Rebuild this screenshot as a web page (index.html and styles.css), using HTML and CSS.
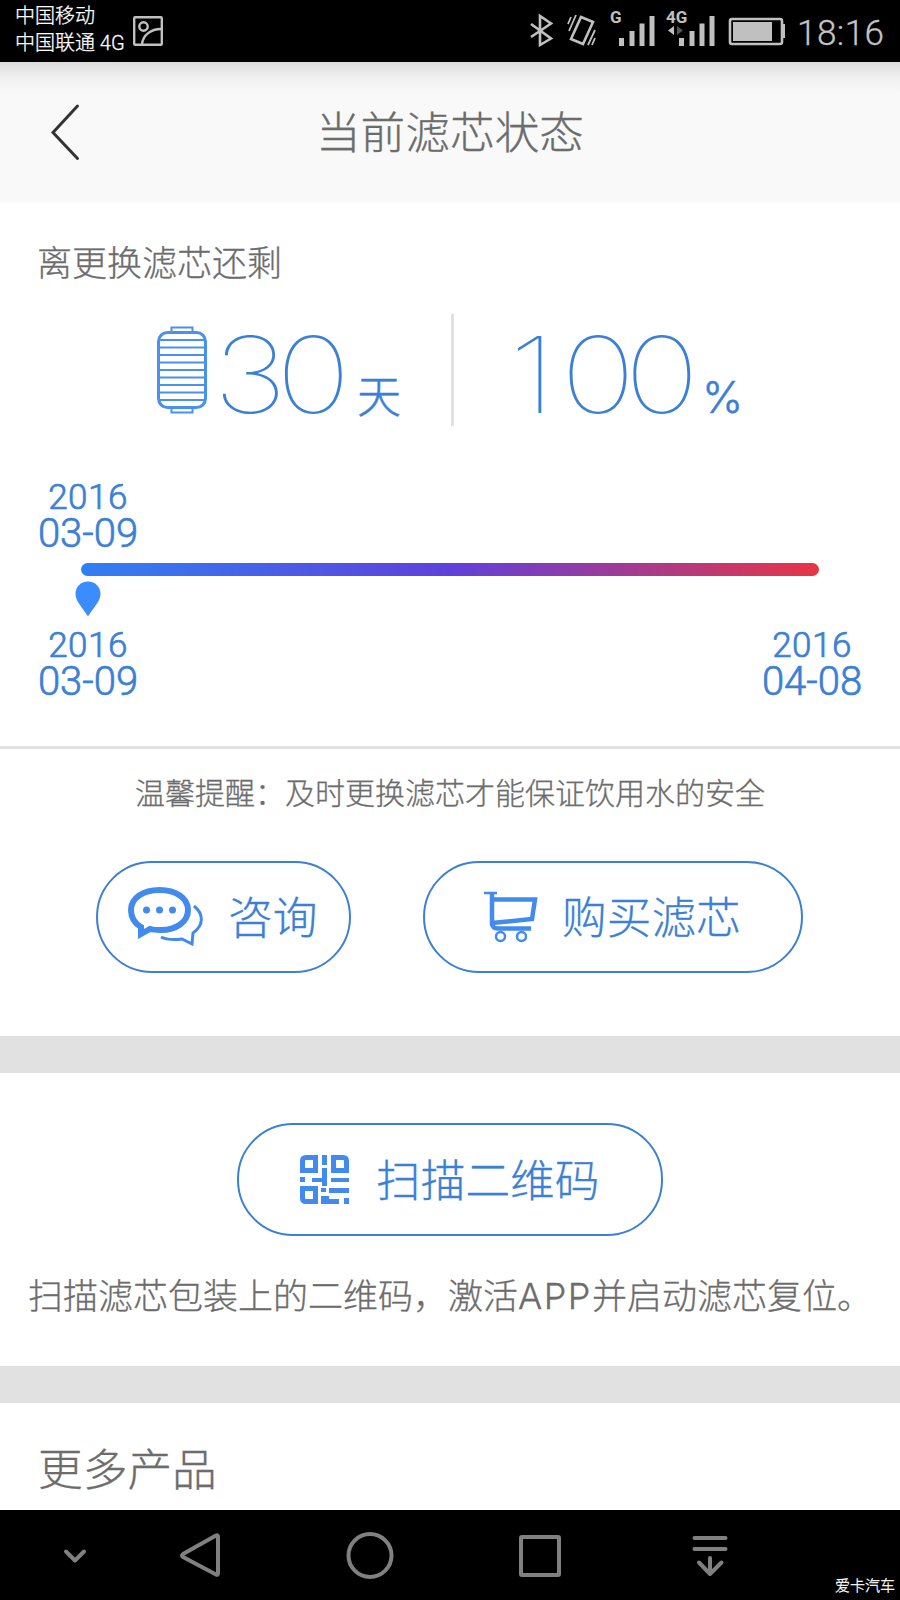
FILE: index.html
```
<!DOCTYPE html>
<html lang="zh-CN">
<head>
<meta charset="utf-8">
<title>当前滤芯状态</title>
<link rel="stylesheet" href="styles.css">
</head>
<body>
<div class="status-bar">
  <div class="carriers">
    <div>中国移动</div>
    <div>中国联通 4G</div>
  </div>
  <svg class="picture" width="30" height="30" viewBox="0 0 30 30">
    <rect x="1.2" y="1.2" width="27.6" height="27.6" rx="1"/>
    <circle cx="10.5" cy="10.5" r="4.2"/>
    <path d="M9 28C10 19 18 13 28 13"/>
  </svg>
  <svg class="status-icons" width="260" height="62" viewBox="0 0 260 62">
    <path class="line" d="M1 24L21 38.500L10 45V16L21 23.500L1 37"/>
    <path class="line" d="M51 17L63 22L53 44L41 39Z"/>
    <path class="thin" d="M46 15L39 31M41 17L38 24M65 30L58 45M65 38L62 45"/>
    <text class="net" x="80" y="23">G</text>
    <path class="bars" d="M91.500 38V46M102 31V46M112 23.500V46M122 16V46"/>
    <text class="net" x="136" y="23">4G</text>
    <path class="fill" d="M144 26V35L138 30.500Z"/>
    <path class="dim" d="M147 26V35L153 30.500Z"/>
    <path class="bars" d="M151.500 38V46M162 31V46M172 23.500V46M182 16V46"/>
    <rect class="line" x="200" y="19" width="52" height="25" rx="2"/>
    <path class="fill" d="M203 22H242V41H203ZM252 24H255V38H252Z"/>
  </svg>
  <div class="clock">18:16</div>
</div>

<div class="header">
  <svg class="back" width="30" height="58" viewBox="0 0 30 58"><path d="M27.500 3L3 29.500L27.500 55.500"/></svg>
  <h1>当前滤芯状态</h1>
</div>

<div class="filter">
  <h2>离更换滤芯还剩</h2>
  <div class="stats">
    <div class="stat days">
      <svg width="50" height="88" viewBox="0 0 50 88">
        <rect class="shell" x="1.500" y="6.500" width="47" height="75" rx="9"/>
        <path d="M14.500 6V1.500H35.500V6M14.500 82V86.500H35.500V82M2 14H48M2 21.500H48M2 29H48M2 36.500H48M2 44H48M2 51.500H48M2 59H48M2 66.500H48M2 74H48"/>
      </svg>
      <span class="number">30</span><span class="unit">天</span>
    </div>
    <div class="stat percent">
      <span class="number"><span class="one">1</span>00</span><span class="unit">%</span>
    </div>
  </div>
  <div class="timeline">
    <div class="date"><span>2016</span><b>03-09</b></div>
    <div class="bar"></div>
    <svg class="pin" width="26" height="36" viewBox="0 0 26 36"><path d="M13 0.500C5.500 0.500 0.500 6 0.500 13C0.500 20 7 26 13 35.500C19 26 25.500 20 25.500 13C25.500 6 20.500 0.500 13 0.500Z"/></svg>
    <div class="range">
      <div class="date"><span>2016</span><b>03-09</b></div>
      <div class="date"><span>2016</span><b>04-08</b></div>
    </div>
  </div>
</div>

<div class="service">
  <p>温馨提醒：及时更换滤芯才能保证饮用水的安全</p>
  <div class="buttons">
    <a class="button ask">
      <svg width="76" height="60" viewBox="0 0 76 60">
        <path class="bubble" d="M13 47L13 40C6 36 3 30 3 23C3 11 15 3 31.500 3C48 3 60 11 60 23C60 35 48 43 33 43C28 43 25 43 22 42Z"/>
        <circle cx="18.500" cy="23" r="3.500"/><circle cx="31.500" cy="23" r="3.500"/><circle cx="44.500" cy="23" r="3.500"/>
        <path class="tail" d="M66 19C76 27 76 38 65 46L64 57L54 52C46 53 39 53 33 50"/>
      </svg>
      <span>咨询</span>
    </a>
    <a class="button buy">
      <svg width="54" height="52" viewBox="0 0 54 52">
        <path class="thin" d="M0 2H13"/>
        <path class="cart" d="M8 2V32L48 28L51 8.500H8M8 31C8 36 10 37.500 14 37.500H47"/>
        <circle cx="16.500" cy="45.500" r="4.500"/><circle cx="37.500" cy="45.500" r="4.500"/>
      </svg>
      <span>购买滤芯</span>
    </a>
  </div>
</div>

<div class="scan">
  <a class="button">
    <svg width="49" height="49" viewBox="0 0 49 49">
      <path class="eye" d="M15.500 2.500V15.500H2.500V6Q2.500 2.500 6 2.500ZM33.500 2.500V15.500H46.500V6Q46.500 2.500 43 2.500ZM15.500 46.500V33.500H2.500V43Q2.500 46.500 6 46.500Z"/>
      <path d="M22 0H27V10H22ZM22 13H27V31H22V27H12V23H22ZM0 22H5V27H0ZM31 23H49V27H31ZM21 33H26V37H21ZM29 33H49V38H29ZM21 41H29V44H39V49H21ZM44 43H49V49H44Z"/>
    </svg>
    <span>扫描二维码</span>
  </a>
  <p>扫描滤芯包装上的二维码，激活<span class="app">APP</span>并启动滤芯复位。</p>
</div>

<div class="more">
  <h1>更多产品</h1>
</div>

<div class="nav-bar">
  <svg width="900" height="90" viewBox="0 0 900 90">
    <path d="M66 41.500L75 50.500L84 41.500"/>
    <path d="M216 25.500Q218 24.500 218 27V63Q218 65.500 216 64.500L183 47Q181 45.500 183 44Z"/>
    <circle cx="370" cy="45.500" r="21.500"/>
    <rect x="521" y="27" width="38" height="38" rx="1"/>
    <path d="M694.500 28H725.500M694.500 39H725.500M710 48V64M699 52.500L710 64L721.500 52.500"/>
  </svg>
  <span class="watermark">爱卡汽车</span>
</div>
</body>
</html>
```
FILE: styles.css
```
* {
  box-sizing: border-box;
}
body {
  margin: 0;
  width: 900px;
  height: 1600px;
  overflow: hidden;
  background: #fff;
  color: #6c6c6c;
  font-family: Roboto, "Noto Sans CJK SC", sans-serif;
  font-weight: 300;
  -webkit-text-stroke: 0.3px;
}
h1, h2, p {
  margin: 0;
  font-weight: 300;
}
svg {
  display: block;
  flex: none;
  fill: none;
}

.status-bar {
  display: flex;
  height: 62px;
  background: #000;
  color: #c4c4c4;
}
.carriers {
  width: 118px;
  margin-left: 15px;
  padding-top: 3px;
  color: #fff;
  font-size: 20px;
  line-height: 27px;
  white-space: nowrap;
}
.picture {
  margin-top: 16px;
  stroke: #c0c0c0;
  stroke-width: 2.4;
}
.status-icons {
  margin-left: 367px;
  stroke: #c0c0c0;
}
.status-icons .line {
  stroke-width: 2.6;
}
.status-icons .thin {
  stroke-width: 1.8;
}
.status-icons .bars {
  stroke-width: 5;
}
.status-icons .fill {
  fill: #c0c0c0;
  stroke: none;
}
.status-icons .dim {
  fill: #555;
  stroke: none;
}
.status-icons .net {
  fill: #c0c0c0;
  stroke: none;
  font-size: 17px;
  font-weight: 700;
  -webkit-text-stroke: 0;
}
.clock {
  margin-left: 7px;
  font-size: 35px;
  line-height: 67px;
  letter-spacing: 0.5px;
}

.header {
  display: flex;
  align-items: center;
  height: 140px;
  background: linear-gradient(#dcdcdc, #f0f0f0 15px, #f9f9f9 32px);
}
.header h1 {
  flex: 1;
  padding: 0 80px 5px 0;
  text-align: center;
}
.back {
  margin-left: 50px;
  stroke: #333;
  stroke-width: 3;
  stroke-linecap: round;
}
h1 {
  font-size: 44.7px;
}

.filter {
  height: 547px;
  padding-top: 37px;
  border-bottom: 3px solid #e1e1e1;
}
.filter h2 {
  height: 52px;
  margin-left: 37px;
  font-size: 35px;
  line-height: 52px;
}
.stats {
  display: flex;
  height: 112px;
  margin-top: 23px;
  color: #3b80d6;
}
.stat {
  display: flex;
  align-items: baseline;
}
.days {
  width: 454px;
  padding-left: 157px;
  border-right: 3px solid #e0e0e0;
}
.days svg {
  align-self: flex-start;
  margin-top: 12px;
  stroke: #4a90ed;
  stroke-width: 2;
}
.days .shell {
  stroke-width: 3;
}
/* thin digits, widened */
.number {
  font-family: Inter, sans-serif;
  font-size: 106px;
  font-weight: 100;
  line-height: 122px;
  letter-spacing: -9.5px;
  transform: scaleX(1.2);
  transform-origin: left;
  -webkit-text-stroke: 0;
}
.one {
  letter-spacing: 4px;
}
.days .number {
  width: 127px;
  margin-left: 6px;
}
.percent {
  padding-left: 55px;
}
.percent .number {
  width: 182px;
}
.unit {
  margin-top: -2px;
  font-size: 44px;
  -webkit-text-stroke: 0.5px;
}
.days .unit {
  margin-left: 17px;
}
.percent .unit {
  margin-left: 11px;
  font-family: Inter, sans-serif;
}

.timeline {
  padding: 54px 36px 0;
  color: #3b80d6;
}
.date {
  width: 104px;
  text-align: center;
}
.date span, .date b {
  display: block;
  font-size: 35px;
  font-weight: 300;
  line-height: 36px;
  letter-spacing: 0.5px;
  -webkit-text-stroke: 0.7px;
}
.date b {
  font-size: 40px;
  letter-spacing: 0;
}
.bar {
  width: 738px;
  height: 13px;
  margin: 11px 0 0 45px;
  border-radius: 7px;
  background: linear-gradient(to right, #317ff5, #6040dc 50%, #e83545);
}
.pin {
  margin: 5px 0 0 39px;
  fill: #3b8cff;
}
.range {
  display: flex;
  justify-content: space-between;
  margin-top: 11px;
}

.service {
  height: 287px;
  padding-top: 23px;
}
.service p {
  font-size: 30px;
  line-height: 44px;
  text-align: center;
}
.buttons {
  display: flex;
  gap: 72px;
  margin: 45px 0 0 96px;
}
.button {
  display: flex;
  align-items: center;
  height: 112px;
  border: 2px solid #3b80d6;
  border-radius: 56px;
  color: #3b80d6;
  font-size: 44.7px;
  white-space: nowrap;
}
.button span {
  padding-bottom: 5px;
}
.ask {
  width: 255px;
  padding-left: 30px;
}
.ask svg {
  fill: #438aee;
}
.ask .bubble {
  fill: none;
  stroke: #438aee;
  stroke-width: 6;
}
.ask .tail {
  fill: none;
  stroke: #438aee;
  stroke-width: 3;
}
.ask span {
  margin-left: 24px;
}
.buy {
  width: 380px;
  padding-left: 59px;
}
.buy svg {
  stroke: #438aee;
  stroke-width: 2.5;
}
.buy .cart {
  stroke-width: 4.5;
}
.buy span {
  margin-left: 24px;
}

.scan {
  height: 367px;
  padding-top: 50px;
  border-top: 37px solid #e1e1e1;
  border-bottom: 37px solid #e1e1e1;
}
.scan .button {
  width: 426px;
  height: 113px;
  margin: 0 auto;
  padding-left: 61px;
}
.scan svg {
  fill: #438aee;
}
.scan .eye {
  fill: none;
  stroke: #438aee;
  stroke-width: 5;
}
.scan .button span {
  margin-left: 27px;
}
.scan p {
  margin: 34px 0 0 28px;
  font-size: 35px;
  line-height: 52px;
  white-space: nowrap;
}
.app {
  font-family: Inter, sans-serif;
  font-size: 36px;
  letter-spacing: 1.5px;
}

.more {
  height: 107px;
  padding: 34px 0 0 38px;
}
.more h1 {
  line-height: 68px;
}

.nav-bar {
  position: relative;
  height: 90px;
  background: #000;
}
.nav-bar svg {
  stroke: #808080;
  stroke-width: 4;
  stroke-linecap: round;
  stroke-linejoin: round;
}
.watermark {
  position: absolute;
  right: 5px;
  bottom: 3px;
  color: #fff;
  font-size: 15px;
  line-height: 22px;
}
```
